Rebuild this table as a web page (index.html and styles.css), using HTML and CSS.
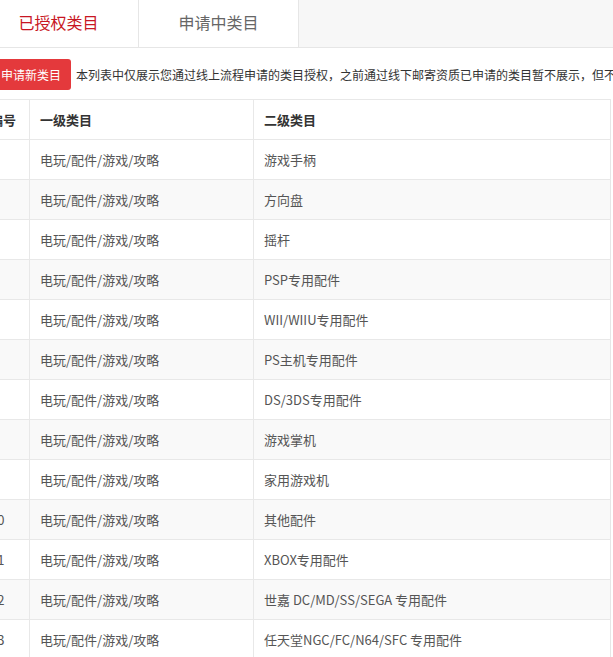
FILE: index.html
```html
<!DOCTYPE html>
<html lang="zh-CN">
<head>
<meta charset="utf-8">
<link rel="stylesheet" href="styles.css">
</head>
<body>
<div class="page">
  <div class="tabs">
    <div class="tab active">已授权类目</div>
    <div class="tab">申请中类目</div>
  </div>
  <div class="toolbar">
    <button class="btn-apply">申请新类目</button>
    <span class="notice">本列表中仅展示您通过线上流程申请的类目授权，之前通过线下邮寄资质已申请的类目暂不展示，但不影响您正常发布商品</span>
  </div>
  <table class="grid">
    <colgroup><col class="c1"><col class="c2"><col class="c3"></colgroup>
    <thead>
      <tr><th>编号</th><th>一级类目</th><th>二级类目</th></tr>
    </thead>
    <tbody>
      <tr><td>1</td><td>电玩/配件/游戏/攻略</td><td>游戏手柄</td></tr>
      <tr><td>2</td><td>电玩/配件/游戏/攻略</td><td>方向盘</td></tr>
      <tr><td>3</td><td>电玩/配件/游戏/攻略</td><td>摇杆</td></tr>
      <tr><td>4</td><td>电玩/配件/游戏/攻略</td><td>PSP专用配件</td></tr>
      <tr><td>5</td><td>电玩/配件/游戏/攻略</td><td>WII/WIIU专用配件</td></tr>
      <tr><td>6</td><td>电玩/配件/游戏/攻略</td><td>PS主机专用配件</td></tr>
      <tr><td>7</td><td>电玩/配件/游戏/攻略</td><td>DS/3DS专用配件</td></tr>
      <tr><td>8</td><td>电玩/配件/游戏/攻略</td><td>游戏掌机</td></tr>
      <tr><td>9</td><td>电玩/配件/游戏/攻略</td><td>家用游戏机</td></tr>
      <tr><td>10</td><td>电玩/配件/游戏/攻略</td><td>其他配件</td></tr>
      <tr><td>11</td><td>电玩/配件/游戏/攻略</td><td>XBOX专用配件</td></tr>
      <tr><td>12</td><td>电玩/配件/游戏/攻略</td><td>世嘉 DC/MD/SS/SEGA 专用配件</td></tr>
      <tr><td>13</td><td>电玩/配件/游戏/攻略</td><td>任天堂NGC/FC/N64/SFC 专用配件</td></tr>
      <tr><td>14</td><td>电玩/配件/游戏/攻略</td><td>游戏光盘</td></tr>
    </tbody>
  </table>
</div>
</body>
</html>
```

FILE: styles.css
```css
html, body {
  margin: 0;
  padding: 0;
  overflow: hidden;
  background: #fff;
}
body {
  font-family: "Noto Sans CJK SC", "Microsoft YaHei", sans-serif;
  color: #333;
}
.page {
  margin-left: -21px;
  width: 700px;
}
.tabs {
  display: flex;
  height: 47px;
  background: #f7f7f7;
  border-bottom: 1px solid #e6e6e6;
}
.tab {
  width: 159px;
  height: 47px;
  line-height: 45px;
  text-align: center;
  font-size: 16px;
  color: #666;
  background: #fff;
  border-right: 1px solid #e6e6e6;
}
.tab.active {
  color: #c81623;
}
.toolbar {
  display: flex;
  align-items: center;
  gap: 5px;
  margin-top: 10px;
  margin-left: 12px;
  height: 32px;
  white-space: nowrap;
}
.btn-apply {
  flex: none;
  height: 31px;
  padding: 0 10px;
  border: none;
  border-radius: 3px;
  background: #e4393c;
  color: #fff;
  font-family: inherit;
  font-size: 12px;
}
.notice {
  font-size: 12px;
  color: #333;
}
.grid {
  margin-top: 9px;
  width: 631px;
  border-collapse: collapse;
  table-layout: fixed;
  font-size: 13px;
  border-right: 1px solid #e6e6e6;
}
.c1 { width: 50px; }
.c2 { width: 224px; }
.c3 { width: 357px; }
.grid th,
.grid td {
  height: 39px;
  padding: 0 10px;
  text-align: left;
  border-top: 1px solid #e8e8e8;
  border-left: 1px solid #e8e8e8;
  white-space: nowrap;
  overflow: hidden;
}
.grid th {
  font-weight: bold;
  color: #333;
}
.grid td {
  color: #555;
}
.grid tbody tr:nth-child(even) td {
  background: #f9f9f9;
}
```
